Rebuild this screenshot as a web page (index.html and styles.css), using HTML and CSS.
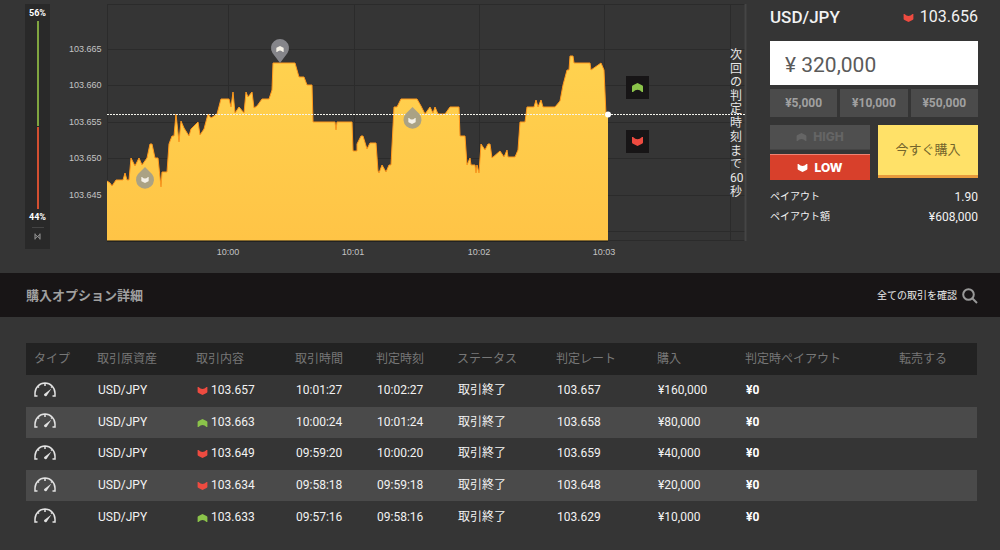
FILE: index.html
```html
<!DOCTYPE html>
<html lang="ja">
<head>
<meta charset="utf-8">
<title>USD/JPY</title>
<link rel="stylesheet" href="styles.css">
</head>
<body>
<svg class="defs" aria-hidden="true">
  <symbol id="up" viewBox="0 0 11 9"><path d="M0 3.500Q0 2.800 1 2.300L5.500 0 10 2.300Q11 2.800 11 3.500V9H10Q5.500 4.500 1 9H0z"/></symbol>
  <symbol id="down" viewBox="0 0 11 9"><path d="M0 0H1Q5.500 4.500 10 0H11V5.500Q11 6.200 10 6.700L5.500 9 1 6.700Q0 6.200 0 5.500z"/></symbol>
  <symbol id="gauge" viewBox="0 0 22 15"><path d="M3.500 14H1V11A10 10 0 0 1 21 11V14H18.500M11 1V4M4 4.500 5 5.500M18 4.500 17 5.500" fill="none" stroke="currentColor" stroke-width="1.500"/><path d="M10 12.200 17.500 6.500 12.500 14Q10 14.800 10 12.200z" fill="currentColor"/></symbol>
</svg>
<main>
  <section class="trade">
    <aside class="ratio">
      <span>56%</span>
      <div class="ratio-bar"><i class="ratio-high"></i><i class="ratio-low"></i></div>
      <span>44%</span>
      <button class="collapse" type="button" aria-label="閉じる"><svg viewBox="0 0 7 7"><path d="M1 0.500V6.500M6 0.500V6.500M1 1.500 6 5.500M1 5.500 6 1.500"/></svg></button>
    </aside>

    <div class="chart">
      <svg class="plot" viewBox="62 0 690 262" role="img" aria-label="USD/JPY チャート">
        <defs>
          <linearGradient id="area" x1="0" y1="0" x2="0" y2="1"><stop offset="0" stop-color="#ffd24f"/><stop offset="1" stop-color="#ffc446"/></linearGradient>
        </defs>
        <path class="grid" d="M107 4.500H746M107 49.500H746M107 85.500H746M107 122.500H746M107 158.500H746M107 195.500H746M107 231.500H746M107 240.500H746M107.500 4V241M228.500 4V241M354.500 4V241M479.500 4V241M604.500 4V241M730.500 4V241"/>
        <path class="edge" d="M745.500 4V241"/>
        <path fill="url(#area)" d="M107 241V181L110 183 112 186 116 180H123L125 173 127 180H129L131 158 135 166 139 158 142 165 147 158 150 144H152L155 158H158L161 187 162 172H167L169 144 172 136H174L176 114 179 142 181 121 184 128 189 136 191 129 198 122 200 135 204 129 208 114 211 118 217 114 221 99H229L231 107 233 92 235 113 239 107 244 113 246 92 248 97 252 92 254 108 257 106 262 99H269L272 90 273 63H295L299 77H304L307 85H312L313 122H335L336 130 337 122H352L353 151H357V144L361 136H363L367 149 370 143H376L378 171 379 173 382 165 386 172 389 165H391L394 107H397L401 99H417L421 106 425 114 430 107 433 113 435 107 438 114H445L450 107H459L460 136H465L467 165 470 158 471 165H475L476 173 477 165 479 173 481 144 485 150 488 144H490L492 158 500 151 504 157 507 150 508 157H515L518 150 520 122H525L527 107H534L536 100 538 107 541 100 543 107H555L560 101 563 85 567 70H569L570 56H573L574 63H590L591 70 601 63 604 70 606 115H608V241z"/>
        <path class="line" d="M107 181 110 183 112 186 116 180H123L125 173 127 180H129L131 158 135 166 139 158 142 165 147 158 150 144H152L155 158H158L161 187 162 172H167L169 144 172 136H174L176 114 179 142 181 121 184 128 189 136 191 129 198 122 200 135 204 129 208 114 211 118 217 114 221 99H229L231 107 233 92 235 113 239 107 244 113 246 92 248 97 252 92 254 108 257 106 262 99H269L272 90 273 63H295L299 77H304L307 85H312L313 122H335L336 130 337 122H352L353 151H357V144L361 136H363L367 149 370 143H376L378 171 379 173 382 165 386 172 389 165H391L394 107H397L401 99H417L421 106 425 114 430 107 433 113 435 107 438 114H445L450 107H459L460 136H465L467 165 470 158 471 165H475L476 173 477 165 479 173 481 144 485 150 488 144H490L492 158 500 151 504 157 507 150 508 157H515L518 150 520 122H525L527 107H534L536 100 538 107 541 100 543 107H555L560 101 563 85 567 70H569L570 56H573L574 63H590L591 70 601 63 604 70 606 115"/>
        <path class="base" d="M107 241H608"/>
        <path class="current" d="M107 114.500H745"/>
        <circle cx="608" cy="114.500" r="3" fill="#fff"/>
        <g class="pin grey"><path d="M280 63 272.500 53A9 9 0 1 1 287.500 53z"/><use href="#up" x="276" y="46" width="8" height="6"/></g>
        <g class="pin tan"><path d="M145 167 152 174A9 9 0 1 1 138 174z"/><use href="#down" x="141" y="177" width="8" height="6"/></g>
        <g class="pin tan"><path d="M412.500 107 419.500 114A9 9 0 1 1 405.500 114z"/><use href="#down" x="408" y="118" width="8" height="6"/></g>
        <g class="axis">
          <text x="69" y="52">103.665</text><text x="69" y="88">103.660</text><text x="69" y="125">103.655</text><text x="69" y="161">103.650</text><text x="69" y="198">103.645</text>
          <g text-anchor="middle"><text x="228" y="255">10:00</text><text x="353" y="255">10:01</text><text x="479" y="255">10:02</text><text x="604" y="255">10:03</text></g>
        </g>
        <text class="countdown"><tspan x="730" y="59">次</tspan><tspan x="730" y="73">回</tspan><tspan x="730" y="86">の</tspan><tspan x="730" y="100">判</tspan><tspan x="730" y="113">定</tspan><tspan x="730" y="127">時</tspan><tspan x="730" y="141">刻</tspan><tspan x="730" y="155">ま</tspan><tspan x="730" y="168">で</tspan><tspan x="730" y="182">60</tspan><tspan x="730" y="196">秒</tspan></text>
      </svg>
      <div class="quick">
        <button class="quick-high" type="button" aria-label="HIGH"><svg><use href="#up"/></svg></button>
        <button class="quick-low" type="button" aria-label="LOW"><svg><use href="#down"/></svg></button>
      </div>
    </div>

    <form class="panel">
      <div class="quote"><h1>USD/JPY</h1><span class="price"><svg class="arrow red"><use href="#down"/></svg>103.656</span></div>
      <input class="amount" type="text" value="¥ 320,000" aria-label="購入金額">
      <div class="presets"><button type="button">¥5,000</button><button type="button">¥10,000</button><button type="button">¥50,000</button></div>
      <div class="actions">
        <div class="sides">
          <button class="high" type="button"><svg class="arrow"><use href="#up"/></svg>HIGH</button>
          <button class="low" type="button"><svg class="arrow"><use href="#down"/></svg>LOW</button>
        </div>
        <button class="buy" type="button">今すぐ購入</button>
      </div>
      <dl class="payout"><div><dt>ペイアウト</dt><dd>1.90</dd></div><div><dt>ペイアウト額</dt><dd>¥608,000</dd></div></dl>
    </form>
  </section>

  <header class="bar">
    <h2>購入オプション詳細</h2>
    <a href="#all">全ての取引を確認<svg viewBox="0 0 16 16"><circle cx="6.500" cy="6.500" r="5.300"/><path d="M10.500 10.500 15 15"/></svg></a>
  </header>

  <section class="history">
    <table>
      <colgroup><col class="c63"><col class="c99"><col class="c99"><col class="c81"><col class="c81"><col class="c99"><col class="c101"><col class="c88"><col class="c154"><col class="c86"></colgroup>
      <thead><tr><th>タイプ</th><th>取引原資産</th><th>取引内容</th><th>取引時間</th><th>判定時刻</th><th>ステータス</th><th>判定レート</th><th>購入</th><th>判定時ペイアウト</th><th>転売する</th></tr></thead>
      <tbody>
        <tr><td><svg class="gauge"><use href="#gauge"/></svg></td><td>USD/JPY</td><td><svg class="arrow red"><use href="#down"/></svg>103.657</td><td>10:01:27</td><td>10:02:27</td><td>取引終了</td><td>103.657</td><td>¥160,000</td><td><b>¥0</b></td><td></td></tr>
        <tr><td><svg class="gauge"><use href="#gauge"/></svg></td><td>USD/JPY</td><td><svg class="arrow green"><use href="#up"/></svg>103.663</td><td>10:00:24</td><td>10:01:24</td><td>取引終了</td><td>103.658</td><td>¥80,000</td><td><b>¥0</b></td><td></td></tr>
        <tr><td><svg class="gauge"><use href="#gauge"/></svg></td><td>USD/JPY</td><td><svg class="arrow red"><use href="#down"/></svg>103.649</td><td>09:59:20</td><td>10:00:20</td><td>取引終了</td><td>103.659</td><td>¥40,000</td><td><b>¥0</b></td><td></td></tr>
        <tr><td><svg class="gauge"><use href="#gauge"/></svg></td><td>USD/JPY</td><td><svg class="arrow red"><use href="#down"/></svg>103.634</td><td>09:58:18</td><td>09:59:18</td><td>取引終了</td><td>103.648</td><td>¥20,000</td><td><b>¥0</b></td><td></td></tr>
        <tr><td><svg class="gauge"><use href="#gauge"/></svg></td><td>USD/JPY</td><td><svg class="arrow green"><use href="#up"/></svg>103.633</td><td>09:57:16</td><td>09:58:16</td><td>取引終了</td><td>103.629</td><td>¥10,000</td><td><b>¥0</b></td><td></td></tr>
      </tbody>
    </table>
  </section>
</main>
</body>
</html>
```
FILE: styles.css
```css
* { box-sizing: border-box; }
body { margin: 0; background: #353535; color: #f2f2f2; font: 12px/16px Roboto, "Noto Sans CJK JP", sans-serif; }
button, input { font: inherit; color: inherit; border: 0; margin: 0; padding: 0; }
button { cursor: pointer; }
.defs { position: absolute; width: 0; height: 0; }
.trade { display: flex; align-items: flex-start; padding: 0 22px 0 25px; min-height: 273px; }

.ratio { width: 25px; height: 245px; margin-top: 4px; margin-right: 12px; padding-top: 1px; background: #292929; display: flex; flex-direction: column; align-items: center; font-size: 9px; font-weight: 700; color: #fff; }
.ratio-bar { width: 2px; height: 188px; display: flex; flex-direction: column; gap: 1px; }
.ratio-high { flex: 56; background: #80a540; }
.ratio-low { flex: 44; background: #d34f31; }
.collapse { width: 12px; height: 18px; margin-top: 2px; border-top: 1px solid #444; background: none; display: grid; place-items: center; }
.collapse svg { width: 7px; height: 7px; fill: none; stroke: #999; stroke-width: 1; }

.chart { position: relative; flex: 1; min-width: 0; margin-right: 18px; }
.plot { display: block; width: 100%; height: auto; }
.grid { stroke: #2b2b2b; stroke-width: 1; }
.edge { stroke: #454545; stroke-width: 2; }
.line { fill: none; stroke: #ff981c; stroke-width: 1; stroke-linejoin: round; }
.base { stroke: #111; stroke-width: 1; }
.current { stroke: #f4f4ec; stroke-width: 1; stroke-dasharray: 2 1; }
.grey { fill: #85858a; }
.tan { fill: #aaa284; }
.pin use { fill: #f4f0e6; }
.axis { fill: #c4c4c4; font: 9px "Liberation Sans", sans-serif; }
.countdown { fill: #e6e6e6; font-size: 12px; }
.quick { position: absolute; left: 564px; left: 82%; margin-left: -2px; top: 29%; display: flex; flex-direction: column; gap: 31px; }
.quick button { width: 23px; height: 23px; background: #171516; display: grid; place-items: center; }
.quick svg { width: 11px; height: 9px; }
.quick-high { fill: #8bc34a; }
.quick-low { fill: #ee4b40; }

.panel { width: 208px; padding-top: 6px; }
.quote { display: flex; justify-content: space-between; align-items: center; height: 22px; margin-bottom: 13px; }
h1 { margin: 0; font-size: 17px; font-weight: 500; }
.price { display: flex; align-items: center; font-size: 16px; }
.price .arrow { margin: 2px 6px 0 0; }
.arrow { width: 11px; height: 8px; fill: currentColor; }
.arrow.red { fill: #ee4b40; }
.arrow.green { fill: #8bc34a; }
.amount { display: block; width: 100%; height: 44px; padding: 4px 15px 0; background: #fff; color: #5a5a5a; font-size: 21px; border-radius: 0; }
.presets { display: grid; grid-template-columns: repeat(3, 1fr); gap: 3px; margin-top: 4px; }
.presets button { height: 28px; background: #4b4b4b; color: #a0a0a0; font-weight: 700; }
.actions { display: grid; grid-template-columns: 1fr 1fr; gap: 8px; margin-top: 8px; }
.sides { display: flex; flex-direction: column; gap: 4px; }
.sides button { display: flex; align-items: center; justify-content: center; gap: 6px; font: 800 12px/16px Inter, sans-serif; }
.high { height: 25px; background: #4f4f4f; color: #656565; border-bottom: 1px solid #444; }
.low { height: 26px; background: #d8402b; color: #fff; border-top: 1px solid #ee8373; }
.buy { height: 53px; background: #ffe168; color: #74652c; font-size: 13px; border-bottom: 3px solid #e89a3c; }
.payout { margin: 7px 0 0; }
.payout div { display: flex; justify-content: space-between; line-height: 20px; }
.payout dt { font-size: 10px; }
.payout dd { margin: 0; }

.bar { display: flex; align-items: center; justify-content: space-between; height: 44px; padding: 2px 22px 0 26px; background: #181516; }
h2 { margin: 0; font-size: 13px; font-weight: 700; color: #a0a0a0; }
.bar a { display: flex; align-items: center; gap: 5px; font-size: 10px; color: #e8e8e8; text-decoration: none; }
.bar a svg { width: 16px; height: 16px; fill: none; stroke: #999; stroke-width: 2; }

.history { padding: 26px 23px 13px 26px; }
table { width: 100%; height: 190px; table-layout: fixed; border-collapse: collapse; }
.c63 { width: 63px; } .c81 { width: 81px; } .c86 { width: 86px; } .c88 { width: 88px; } .c99 { width: 99px; } .c101 { width: 101px; } .c154 { width: 154px; }
th { height: 32px; padding: 0 0 0 8px; text-align: left; font-weight: 400; color: #777; background: #222; white-space: nowrap; }
td { padding: 0 0 1px 9px; white-space: nowrap; }
td:first-child { padding: 0 0 3px 8px; }
tbody tr:nth-child(even) { background: #4a4a4a; }
td .arrow { margin-right: 3px; vertical-align: -1px; }
.gauge { display: block; width: 22px; height: 15px; color: #e2e2e2; }
b { color: #fff; }
```
